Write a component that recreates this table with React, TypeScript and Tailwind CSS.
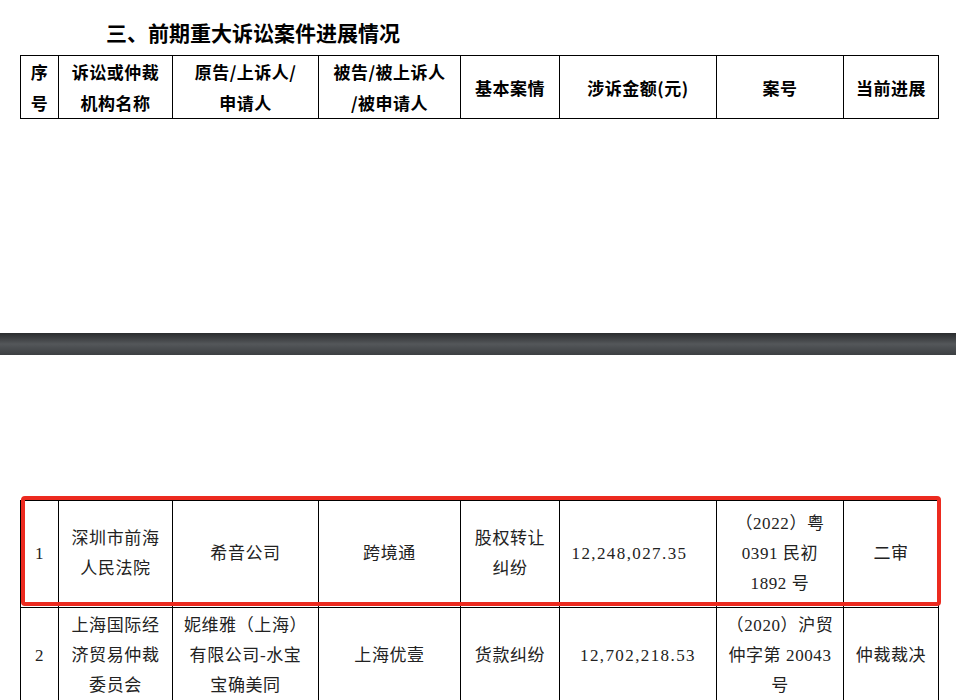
import React from "react";

const cols = [38, 114, 146, 142, 99, 157, 127, 95];
const colClasses = [
  "w-[38px]",
  "w-[114px]",
  "w-[146px]",
  "w-[142px]",
  "w-[99px]",
  "w-[157px]",
  "w-[127px]",
  "w-[95px]",
];

const headers: React.ReactNode[] = [
  <>序<br />号</>,
  <>诉讼或仲裁<br />机构名称</>,
  <>原告/上诉人/<br />申请人</>,
  <>被告/被上诉人<br />/被申请人</>,
  "基本案情",
  "涉诉金额(元)",
  "案号",
  "当前进展",
];

type Row = { cells: React.ReactNode[]; h: string };

const rows: Row[] = [
  {
    h: "h-[107px]",
    cells: [
      "1",
      <>深圳市前海<br />人民法院</>,
      "希音公司",
      "跨境通",
      <>股权转让<br />纠纷</>,
      <span className="tracking-[1.4px] pr-[17px]">12,248,027.35</span>,
      <>（2022）粤<br />0391 民初<br />1892 号</>,
      "二审",
    ],
  },
  {
    h: "h-[97px]",
    cells: [
      "2",
      <>上海国际经<br />济贸易仲裁<br />委员会</>,
      <>妮维雅（上海）<br />有限公司-水宝<br />宝确美同</>,
      "上海优壹",
      "货款纠纷",
      <span className="tracking-[1.4px]">12,702,218.53</span>,
      <>（2020）沪贸<br />仲字第 20043<br />号</>,
      "仲裁裁决",
    ],
  },
];

const ColGroup = () => (
  <colgroup>
    {cols.map((_, i) => (
      <col key={i} className={colClasses[i]} />
    ))}
  </colgroup>
);

export default function App() {
  return (
    <div className="w-[956px] h-[700px] overflow-hidden bg-white">
      <h1 className="pl-[106px] pt-[20px] text-[21px] leading-[24px] font-bold text-black font-['Noto_Sans_CJK_SC',sans-serif]">
        三、前期重大诉讼案件进展情况
      </h1>

      <table className="ml-[20px] mt-[11px] w-[918px] table-fixed border-collapse font-['Noto_Sans_CJK_SC',sans-serif] font-bold text-[17px] leading-[31px] tracking-[0.5px] text-black">
        <ColGroup />
        <tbody>
          <tr className="h-[63px]">
            {headers.map((h, i) => (
              <td key={i} className="border border-black text-center align-middle p-0">
                {h}
              </td>
            ))}
          </tr>
        </tbody>
      </table>

      <div className="mt-[214px] h-[22px] w-full bg-linear-to-b from-[#2a2c2e] via-[#54575a] to-[#3c3f42]" />

      <div className="relative ml-[20px] mt-[145px] w-[918px]">
        <table className="w-[918px] table-fixed border-collapse font-['Liberation_Serif','Noto_Sans_CJK_SC',serif] text-[17px] leading-[30px] tracking-[0.6px] text-[#222]">
          <ColGroup />
          <tbody>
            {rows.map((r, ri) => (
              <tr key={ri} className={r.h}>
                {r.cells.map((c, ci) => (
                  <td key={ci} className="border border-black text-center align-middle p-0">
                    {c}
                  </td>
                ))}
              </tr>
            ))}
          </tbody>
        </table>
        <div className="absolute left-[1px] top-[-4px] w-[920px] h-[110px] border-4 border-[#ec2a1f] rounded-[4px]" />
      </div>
    </div>
  );
}
